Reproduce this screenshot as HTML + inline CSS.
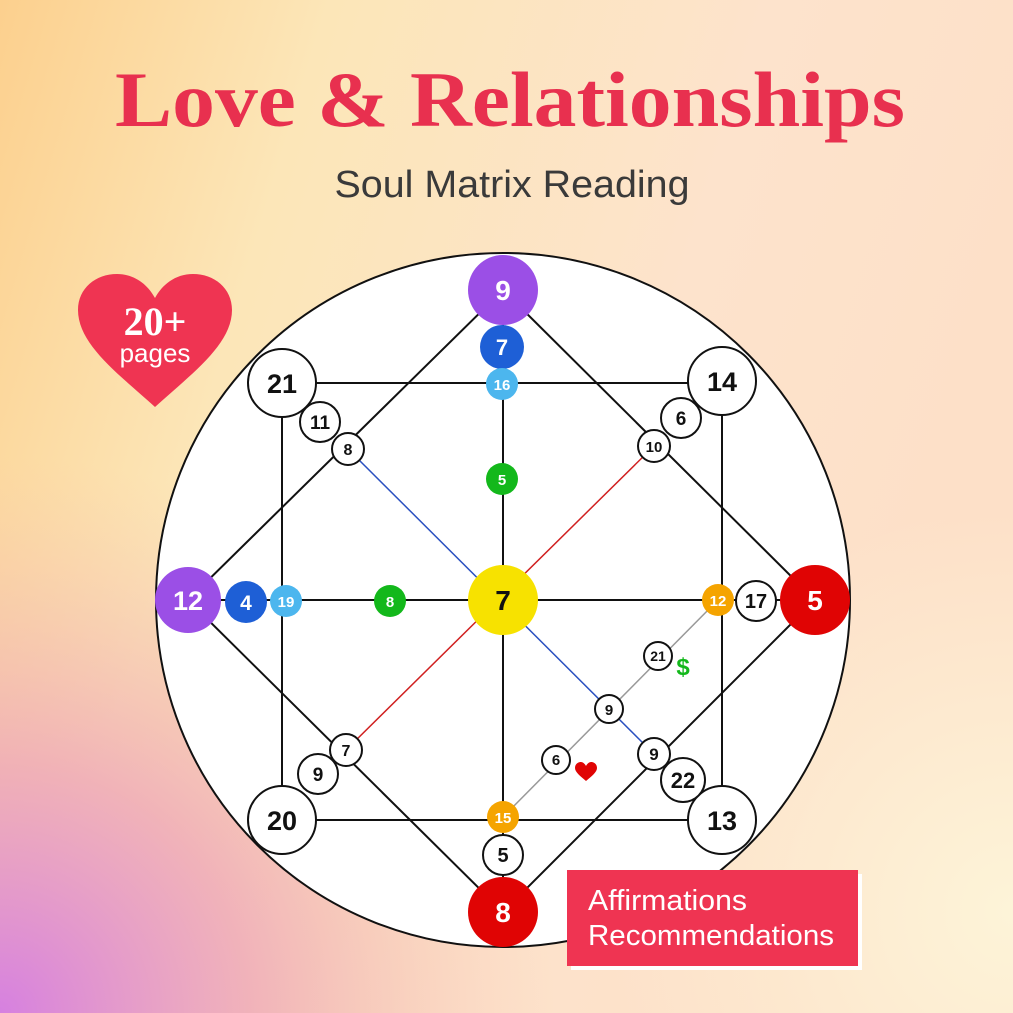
<!DOCTYPE html>
<html><head><meta charset="utf-8"><style>
html,body{margin:0;padding:0;}
body{width:1013px;height:1013px;overflow:hidden;background:#fbe3c4;}
svg{display:block}
</style></head><body>
<svg width="1013" height="1013" viewBox="0 0 1013 1013" xmlns="http://www.w3.org/2000/svg" font-family="Liberation Sans, sans-serif">
<defs>
<linearGradient id="bg" x1="0" y1="0" x2="1" y2="0.3">
<stop offset="0" stop-color="#fcd08e"/><stop offset="0.3" stop-color="#fce6b8"/><stop offset="0.7" stop-color="#fde3cc"/><stop offset="1" stop-color="#fde0c8"/>
</linearGradient>
<radialGradient id="pk" cx="0" cy="1" r="0.55">
<stop offset="0" stop-color="#d680e0"/><stop offset="0.45" stop-color="#eea6b8" stop-opacity="0.8"/><stop offset="1" stop-color="#f7c3a8" stop-opacity="0"/>
</radialGradient>
<radialGradient id="yl" cx="1" cy="0.9" r="0.4">
<stop offset="0" stop-color="#fdf4d8"/><stop offset="1" stop-color="#fdf4d8" stop-opacity="0"/>
</radialGradient>
</defs>
<rect width="1013" height="1013" fill="url(#bg)"/>
<rect width="1013" height="1013" fill="url(#yl)"/>
<rect width="1013" height="1013" fill="url(#pk)"/>

<text x="510" y="126" text-anchor="middle" font-family="Liberation Serif, serif" font-weight="bold" font-size="78" fill="#e8304f" textLength="790" lengthAdjust="spacingAndGlyphs">Love &amp; Relationships</text>
<text x="512" y="197" text-anchor="middle" font-size="38" fill="#3a3a3a" textLength="355" lengthAdjust="spacingAndGlyphs">Soul Matrix Reading</text>

<!-- heart -->
<path d="M155 407 C120 375 78 345 78 310 C78 288 96 274 117 274 C135 274 148 285 155 298 C162 285 175 274 193 274 C214 274 232 288 232 310 C232 345 190 375 155 407 Z" fill="#ef3452"/>
<text x="155" y="335" text-anchor="middle" font-family="Liberation Serif, serif" font-weight="bold" font-size="40" fill="#fff">20+</text>
<text x="155" y="362" text-anchor="middle" font-size="26" fill="#fff">pages</text>

<circle cx="503" cy="600" r="347" fill="#fff" stroke="#111" stroke-width="2"/>
<g stroke="#111" stroke-width="2" fill="none">
<rect x="282" y="383" width="440" height="437"/>
<polygon points="503,290 815,600 503,912 188,600"/>
<line x1="503" y1="290" x2="503" y2="912"/>
<line x1="188" y1="600" x2="815" y2="600"/>
</g>
<line x1="348" y1="449" x2="654" y2="754" stroke="#2a50c0" stroke-width="1.5"/>
<line x1="654" y1="446" x2="346" y2="750" stroke="#d02020" stroke-width="1.5"/>
<line x1="718" y1="600" x2="503" y2="817" stroke="#999" stroke-width="1.5"/>

<g font-weight="bold" text-anchor="middle" stroke-width="2">
<g fill="#fff" stroke="#111">
<circle cx="282" cy="383" r="34"/><circle cx="722" cy="381" r="34"/>
<circle cx="282" cy="820" r="34"/><circle cx="722" cy="820" r="34"/>
<circle cx="320" cy="422" r="20"/><circle cx="348" cy="449" r="16"/>
<circle cx="681" cy="418" r="20"/><circle cx="654" cy="446" r="16"/>
<circle cx="756" cy="601" r="20"/>
<circle cx="658" cy="656" r="14"/><circle cx="609" cy="709" r="14"/>
<circle cx="654" cy="754" r="16"/><circle cx="683" cy="780" r="22"/>
<circle cx="556" cy="760" r="14"/>
<circle cx="346" cy="750" r="16"/><circle cx="318" cy="774" r="20"/>
<circle cx="503" cy="855" r="20"/>
</g>
<g fill="#111" stroke="none">
<text x="282" y="393" font-size="27">21</text><text x="722" y="391" font-size="27">14</text>
<text x="282" y="830" font-size="27">20</text><text x="722" y="830" font-size="27">13</text>
<text x="320" y="429" font-size="19">11</text><text x="348" y="455" font-size="16">8</text>
<text x="681" y="425" font-size="19">6</text><text x="654" y="452" font-size="15">10</text>
<text x="756" y="608" font-size="20">17</text>
<text x="658" y="661" font-size="14">21</text><text x="609" y="715" font-size="15">9</text>
<text x="654" y="760" font-size="17">9</text><text x="683" y="788" font-size="22">22</text>
<text x="556" y="765" font-size="15">6</text>
<text x="346" y="756" font-size="16">7</text><text x="318" y="781" font-size="19">9</text>
<text x="503" y="862" font-size="20">5</text>
</g>
<circle cx="503" cy="290" r="35" fill="#9b4fe6"/><text x="503" y="300" font-size="28" fill="#fff">9</text>
<circle cx="502" cy="347" r="22" fill="#1e5fd6"/><text x="502" y="355" font-size="22" fill="#fff">7</text>
<circle cx="502" cy="384" r="16" fill="#4cb6ee"/><text x="502" y="390" font-size="15" fill="#fff">16</text>
<circle cx="502" cy="479" r="16" fill="#13b81b"/><text x="502" y="485" font-size="15" fill="#fff">5</text>
<circle cx="503" cy="600" r="35" fill="#f7e200"/><text x="503" y="610" font-size="28" fill="#111">7</text>
<circle cx="188" cy="600" r="33" fill="#9b4fe6"/><text x="188" y="610" font-size="27" fill="#fff">12</text>
<circle cx="246" cy="602" r="21" fill="#1e5fd6"/><text x="246" y="610" font-size="21" fill="#fff">4</text>
<circle cx="286" cy="601" r="16" fill="#4cb6ee"/><text x="286" y="607" font-size="15" fill="#fff">19</text>
<circle cx="390" cy="601" r="16" fill="#13b81b"/><text x="390" y="607" font-size="15" fill="#fff">8</text>
<circle cx="718" cy="600" r="16" fill="#f5a400"/><text x="718" y="606" font-size="15" fill="#fff">12</text>
<circle cx="815" cy="600" r="35" fill="#e00404"/><text x="815" y="610" font-size="28" fill="#fff">5</text>
<circle cx="503" cy="817" r="16" fill="#f5a400"/><text x="503" y="823" font-size="15" fill="#fff">15</text>
<circle cx="503" cy="912" r="35" fill="#e00404"/><text x="503" y="922" font-size="28" fill="#fff">8</text>
<text x="683" y="675" font-size="24" fill="#13b81b">$</text>
</g>
<path d="M586 781 C580 776 575 772 575 768 C575 764 578 762 581 762 C583 762 585 764 586 766 C587 764 589 762 591 762 C594 762 597 764 597 768 C597 772 592 776 586 781 Z" fill="#e00404"/>

<rect x="571" y="874" width="291" height="96" fill="#fff"/>
<rect x="567" y="870" width="291" height="96" fill="#ef3452"/>
<text x="588" y="910" font-size="29" fill="#fff" textLength="159" lengthAdjust="spacingAndGlyphs">Affirmations</text>
<text x="588" y="945" font-size="29" fill="#fff" textLength="246" lengthAdjust="spacingAndGlyphs">Recommendations</text>
</svg>
</body></html>
